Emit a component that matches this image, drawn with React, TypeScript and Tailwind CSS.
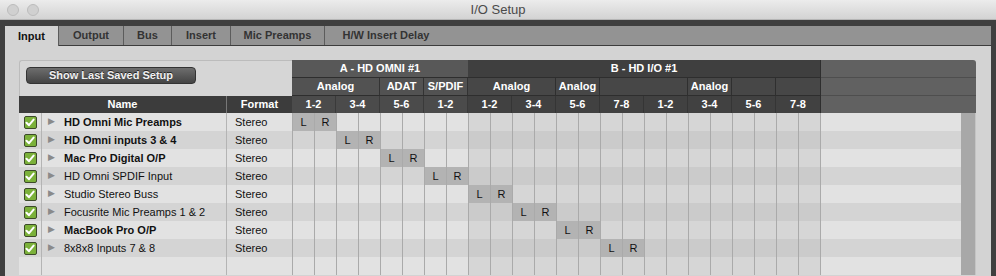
import React from 'react'

const rows = [
  { name: 'HD Omni Mic Preamps', bold: true },
  { name: 'HD Omni inputs 3 & 4', bold: true },
  { name: 'Mac Pro Digital O/P', bold: true },
  { name: 'HD Omni SPDIF Input', bold: false },
  { name: 'Studio Stereo Buss', bold: false },
  { name: 'Focusrite Mic Preamps 1 & 2', bold: false },
  { name: 'MacBook Pro O/P', bold: true },
  { name: '8x8x8 Inputs 7 & 8', bold: false },
]

const tabs = [
  { label: 'Input', w: 'w-[54px]' },
  { label: 'Output', w: 'w-[65px]' },
  { label: 'Bus', w: 'w-[48px]' },
  { label: 'Insert', w: 'w-[59px]' },
  { label: 'Mic Preamps', w: 'w-[94px]' },
  { label: 'H/W Insert Delay', w: 'w-[122px]' },
]

const subA = [
  { label: 'Analog', w: 'w-[88px]' },
  { label: 'ADAT', w: 'w-[44px]' },
  { label: 'S/PDIF', w: 'w-[44px]' },
]
const subB = [
  { label: 'Analog', w: 'w-[88px]' },
  { label: 'Analog', w: 'w-[44px]' },
  { label: '', w: 'w-[88px]' },
  { label: 'Analog', w: 'w-[44px]' },
  { label: '', w: 'w-[44px]' },
  { label: '', w: 'w-[44px]' },
]
const pairsA = ['1-2', '3-4', '5-6', '1-2']
const pairsB = ['1-2', '3-4', '5-6', '7-8', '1-2', '3-4', '5-6', '7-8']

const Check = () => (
  <div className="w-[13px] h-[13px] rounded-[2px] bg-[#7bb13a] border border-[#3c4a2a] flex items-center justify-center">
    <svg width="10" height="9" viewBox="0 0 10 9">
      <path d="M1.5 4.8 L4 7.2 L8.6 1.6" fill="none" stroke="#fff" strokeWidth="2" strokeLinecap="round" strokeLinejoin="round" />
    </svg>
  </div>
)

const DataRow = ({ i, row }: { i: number; row?: { name: string; bold: boolean } }) => {
  const light = i % 2 === 0
  const bgL = light ? 'bg-[#e2e2e2]' : 'bg-[#d4d4d4]'
  return (
    <div className="flex h-[18px] text-[11px] text-[#111]">
      <div className={`w-[22px] flex items-center justify-center ${bgL}`}>{row && <Check />}</div>
      <div className={`w-[185px] flex items-center border-l border-[#b4b4b4] ${bgL}`}>
        {row && (
          <>
            <span className="ml-[6px] text-[9px] text-[#8a8a8a]">▶</span>
            <span className={`ml-[9px] ${row.bold ? 'font-bold' : ''}`}>{row.name}</span>
          </>
        )}
      </div>
      <div className={`w-[66px] flex items-center border-l border-[#b4b4b4] ${bgL}`}>
        {row && <span className="ml-[8px]">Stereo</span>}
      </div>
      {Array.from({ length: 24 }).map((_, c) => {
        const on = row && (c === i * 2 || c === i * 2 + 1)
        const b = c >= 8
        const bg = on
          ? 'bg-[#b3b3b3]'
          : b
            ? light ? 'bg-[#d6d6d6]' : 'bg-[#cbcbcb]'
            : bgL
        return (
          <div key={c} className={`w-[22px] flex items-center justify-center border-l border-[#aaaaaa] ${bg}`}>
            {on && (c % 2 === 0 ? 'L' : 'R')}
          </div>
        )
      })}
      <div className={`w-[141px] border-l border-[#aaaaaa] ${bgL}`} />
      <div className="w-[15px] bg-[#a8a8a8] border-r border-[#c4c4c4]" />
    </div>
  )
}

export default function App() {
  return (
    <div className="w-[996px] h-[276px] overflow-hidden bg-[#3f3f3f] font-['Liberation_Sans',Arial,sans-serif]">
      {/* title bar */}
      <div className="relative h-[20px] bg-gradient-to-b from-[#ececec] to-[#d3d3d3] flex items-center justify-center border-b border-[#b5b5b5]">
        <div className="absolute left-[7px] top-[4px] flex gap-[8px]">
          <div className="w-[12px] h-[12px] rounded-full bg-[#d0d0d0] border border-[#bcbcbc]" />
          <div className="w-[12px] h-[12px] rounded-full bg-[#d0d0d0] border border-[#bcbcbc]" />
        </div>
        <span className="text-[13px] text-[#4a4a4a]">I/O Setup</span>
      </div>

      <div className="px-[5px] pt-[6px]">
        {/* tabs */}
        <div className="flex h-[20px] bg-[#939393] border-b border-[#3c3c3c] w-[986px]">
          {tabs.map((t, i) => (
            <div
              key={t.label}
              className={`${t.w} flex items-center justify-center text-[11px] font-bold ${
                i === 0 ? 'bg-[#d3d3d3] text-[#111] h-[20px] -mb-px' : 'text-[#333]'
              } ${i > 0 && i < 5 ? 'border-r border-[#5c5c5c]' : ''} ${i === 0 ? 'border-r border-[#5c5c5c]' : ''}`}
            >
              {t.label}
            </div>
          ))}
        </div>

        {/* content */}
        <div className="bg-[#d3d3d3] h-[230px] pl-[14px] pt-[14px]">
          <div className="w-[957px] flex flex-col">
            {/* header */}
            <div className="flex h-[53px]">
              <div className="w-[273px] flex flex-col">
                <div className="h-[36px] bg-[#d6d6d6] border-l border-t border-[#bcbcbc] rounded-tl-[3px] pl-[6px] pt-[6px]">
                  <div className="w-[170px] h-[17px] rounded-[4px] bg-gradient-to-b from-[#6e6e6e] to-[#444] border border-[#333] flex items-center justify-center text-[11px] font-bold text-[#f0f0f0] [text-shadow:0_-1px_0_#222]">
                    Show Last Saved Setup
                  </div>
                </div>
                <div className="h-[17px] flex bg-[#3c3c3c] text-white text-[11px] font-bold">
                  <div className="w-[207px] flex items-center justify-center">Name</div>
                  <div className="w-[66px] flex items-center justify-center border-l border-[#777]">Format</div>
                </div>
              </div>
              <div className="w-[528px] flex flex-col text-white text-[11px] font-bold">
                <div className="h-[18px] flex border-b border-[#2e2e2e]">
                  <div className="w-[176px] bg-[#585858] flex items-center justify-center">A - HD OMNI #1</div>
                  <div className="w-[352px] bg-[#3f3f3f] flex items-center justify-center">B - HD I/O #1</div>
                </div>
                <div className="h-[18px] flex border-b border-[#2e2e2e]">
                  {subA.map((s, i) => (
                    <div key={'a' + i} className={`${s.w} bg-[#525252] flex items-center justify-center border-r border-[#333]`}>{s.label}</div>
                  ))}
                  {subB.map((s, i) => (
                    <div key={'b' + i} className={`${s.w} bg-[#474747] flex items-center justify-center ${i < 5 ? 'border-r border-[#2f2f2f]' : ''}`}>{s.label}</div>
                  ))}
                </div>
                <div className="h-[17px] flex">
                  {pairsA.map((p, i) => (
                    <div key={'pa' + i} className="w-[44px] bg-[#4b4b4b] flex items-center justify-center border-r border-[#3a3a3a]">{p}</div>
                  ))}
                  {pairsB.map((p, i) => (
                    <div key={'pb' + i} className={`w-[44px] bg-[#414141] flex items-center justify-center ${i < 7 ? 'border-r border-[#353535]' : ''}`}>{p}</div>
                  ))}
                </div>
              </div>
              <div className="w-[156px] flex flex-col bg-[#616161] border-l border-[#2e2e2e] rounded-tr-[3px]">
                <div className="h-[18px] border-b border-[#4e4e4e]" />
                <div className="h-[18px] border-b border-[#4e4e4e]" />
                <div className="h-[17px]" />
              </div>
            </div>
            {/* rows */}
            {Array.from({ length: 9 }).map((_, i) => (
              <DataRow key={i} i={i} row={rows[i]} />
            ))}
          </div>
        </div>
      </div>
    </div>
  )
}
